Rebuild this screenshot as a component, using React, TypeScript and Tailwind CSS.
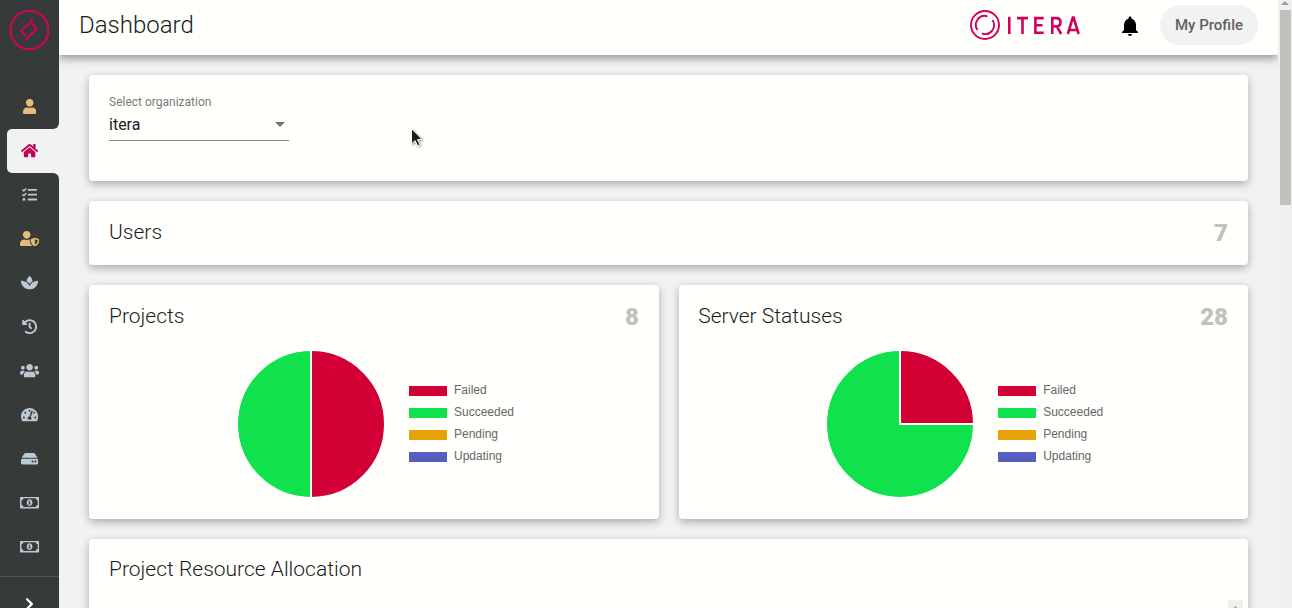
import React from "react";
import {
  FaUser, FaHome, FaTasks, FaUserShield, FaSpa, FaHistory, FaUsers,
  FaTachometerAlt, FaHdd, FaRegMoneyBillAlt, FaChevronRight,
} from "react-icons/fa";

const NAV = [
  { Icon: FaUser, cls: "w-[13.4px] h-[15.3px] text-[#e6bb7c]" },
  { Icon: FaHome, cls: "w-[17.2px] h-[15.3px] text-[#c9005a]" },
  { Icon: FaTasks, cls: "w-[15.3px] h-[15.3px] text-[#bccad4]" },
  { Icon: FaUserShield, cls: "w-[19.2px] h-[15.3px] text-[#e6bb7c]" },
  { Icon: FaSpa, cls: "w-[17.2px] h-[15.3px] text-[#bccad4]" },
  { Icon: FaHistory, cls: "w-[15.3px] h-[15.3px] text-[#bccad4]" },
  { Icon: FaUsers, cls: "w-[19.2px] h-[15.3px] text-[#bccad4]" },
  { Icon: FaTachometerAlt, cls: "w-[17.2px] h-[15.3px] text-[#bccad4]" },
  { Icon: FaHdd, cls: "w-[17.2px] h-[15.3px] text-[#bccad4]" },
  { Icon: FaRegMoneyBillAlt, cls: "w-[19.2px] h-[15.3px] text-[#bccad4]" },
  { Icon: FaRegMoneyBillAlt, cls: "w-[19.2px] h-[15.3px] text-[#bccad4]" },
];

const LEGEND = [
  { label: "Failed", color: "bg-[#d30036]" },
  { label: "Succeeded", color: "bg-[#10e24e]" },
  { label: "Pending", color: "bg-[#e6a307]" },
  { label: "Updating", color: "bg-[#545fc0]" },
];

const CARD = "rounded bg-[#fffffc] shadow-[0_3px_8px_rgba(0,0,0,0.3)]";

function Sidebar() {
  return (
    <aside className="flex w-[59px] shrink-0 flex-col bg-[#f1f3f3]">
      <div className="flex h-[129px] shrink-0 flex-col rounded-br-[6px] bg-[#363a38]">
        <div className="flex h-[85px] justify-center pt-[10px] pr-px">
          <svg className="h-10 w-10" viewBox="0 0 40 40" fill="none" stroke="#d6005c" strokeWidth="2">
            <circle cx="20.4" cy="20" r="19" />
            <path d="M23.5 8.3 L22 11.7 L12 20.7 L17 26" />
            <path d="M22.5 13.2 L28 18.7 L19 27.3 L17 30.7" />
          </svg>
        </div>
        <NavItem item={NAV[0]} />
      </div>
      <div className="flex h-11 shrink-0 bg-[#363a38]">
        <div className="ml-[7px] flex flex-1 items-center rounded-l-[5px] bg-[#f1f3f3] pr-[7px]">
          <NavItem item={NAV[1]} />
        </div>
      </div>
      <div className="flex flex-1 flex-col rounded-tr-[6px] bg-[#363a38]">
        {NAV.slice(2).map((item, i) => (
          <NavItem key={i} item={item} />
        ))}
        <div className="mt-[7px] flex h-14 shrink-0 items-center justify-center border-t border-[#505452] pr-px pb-[2px]">
          <FaChevronRight className="h-[14px] w-[9px] text-white" />
        </div>
      </div>
    </aside>
  );
}

function NavItem({ item }: { item: (typeof NAV)[number] }) {
  return (
    <div className="flex h-11 w-full shrink-0 items-center justify-center pb-[1.4px]">
      <item.Icon className={item.cls} />
    </div>
  );
}

function Header() {
  return (
    <header className="z-10 flex h-[55px] shrink-0 items-center bg-[#fffffc] pr-5 pl-5 shadow-[0_3px_9px_rgba(0,0,0,0.42)]">
      <h1 className="mb-[6px] flex-1 text-[24px] leading-8 font-light text-[#1c1c1c]">Dashboard</h1>
      <svg className="mb-[5px] h-[30px] w-[112px]" viewBox="0 0 112 30" fill="none" stroke="#d0005c">
        <circle cx="15" cy="15" r="14" strokeWidth="1.9" />
        <path d="M17.5 6.3 A9 9 0 0 0 7.5 20 M22.5 10 A9 9 0 0 1 12 23.5" strokeWidth="1.9" />
        <g strokeWidth="2.6">
          <path d="M39.3 6.8 V24" />
          <path d="M47 8.1 H58 M52.5 8.1 V24" />
          <path d="M73.7 8.1 H65.4 V22.7 H73.7 M65.4 15.3 H72.5" />
          <path d="M82.3 24 V8.1 H86.5 Q90.5 8.1 90.5 12.3 Q90.5 16.4 86.5 16.4 H82.3 M86.8 16.4 L91.2 24" />
          <path d="M97.8 24 L102.8 7.5 H103.6 L108.6 24 M99.5 20 H107" />
        </g>
      </svg>
      <svg className="mb-[3px] ml-[36px] h-6 w-6 text-black" viewBox="0 0 24 24" fill="currentColor">
        <path d="M12 22c1.1 0 2-.9 2-2h-4c0 1.1.89 2 2 2zm6-6v-5c0-3.07-1.64-5.64-4.5-6.32V4c0-.83-.67-1.5-1.5-1.5s-1.5.67-1.5 1.5v.68C7.63 5.36 6 7.92 6 11v5l-2 2v1h16v-1l-2-2z" />
      </svg>
      <button className="mb-[5px] ml-[18px] h-10 w-[98px] rounded-full bg-[#f1f3f3] text-[15px] font-medium text-[#5e625f]">
        My Profile
      </button>
    </header>
  );
}

function CardHead({ title, count }: { title: string; count: string }) {
  return (
    <div className="flex h-8 items-center justify-between">
      <h2 className="text-[21px] leading-8 font-light text-[#1c1c1c]">{title}</h2>
      <span className="pt-[2px] text-[24px] leading-8 font-black text-[#c1c1bd]">{count}</span>
    </div>
  );
}

function PieCard({ title, count, slice, inset }: { title: string; count: string; slice: string; inset: string }) {
  return (
    <section className={`${CARD} h-[234px] min-w-0 pt-[15px] pr-5 ${inset}`}>
      <CardHead title={title} count={count} />
      <div className="mt-[18px] flex items-start pl-[128px]">
        <svg className="h-[148px] w-[148px]" viewBox="0 0 148 148">
          <circle cx="74" cy="74" r="73.3" fill="#10e24e" />
          <path d={slice} fill="#d30036" stroke="#fffffc" strokeWidth="2" />
          <circle cx="74" cy="74" r="74" fill="none" stroke="#fffffc" strokeWidth="2" />
        </svg>
        <ul className="mt-[29px] ml-6 font-['Liberation_Sans',Arial,sans-serif] text-[12px] text-[#666]">
          {LEGEND.map((l) => (
            <li key={l.label} className="flex h-[22px] items-center">
              <span className={`${l.color} mt-[2px] mr-[7px] h-[10px] w-[38px]`} />
              {l.label}
            </li>
          ))}
        </ul>
      </div>
    </section>
  );
}

export default function App() {
  return (
    <div className="relative flex h-[608px] w-[1292px] overflow-hidden bg-[#f1f3f3] font-['Roboto',sans-serif]">
      <Sidebar />
      <div className="flex w-[1219px] shrink-0 flex-col overflow-hidden">
        <Header />
        <main className="flex flex-col gap-5 pt-5 pr-[30px] pl-[30px]">
          <section className={`${CARD} h-[106px] shrink-0 px-5 pt-[18px]`}>
            <div className="w-[180px] border-b border-[#8b8b89] pb-1">
              <div className="text-[12px] leading-[18px] text-[#7b7b79]">Select organization</div>
              <div className="flex items-center justify-between pt-[3px] pr-1">
                <span className="text-[16px] leading-[22px] text-[#202020]">itera</span>
                <svg className="mb-[2px] h-[5px] w-[10px]" viewBox="0 0 10 5"><path d="M0 0h10L5 5z" fill="#757573" /></svg>
              </div>
            </div>
          </section>
          <section className={`${CARD} h-16 shrink-0 px-5 pt-[15px]`}>
            <CardHead title="Users" count="7" />
          </section>
          <div className="grid shrink-0 grid-cols-[570px_569px] gap-5">
            <PieCard title="Projects" count="8" slice="M74 74V-1A75 75 0 0 1 74 149Z" inset="pl-5" />
            <PieCard title="Server Statuses" count="28" slice="M74 74V-1A75 75 0 0 1 149 74Z" inset="pl-[19.2px]" />
          </div>
          <section className={`${CARD} h-[150px] shrink-0 pt-[14px] pr-[5px] pl-5`}>
            <h2 className="text-[21px] leading-8 font-light text-[#1c1c1c]">Project Resource Allocation</h2>
            <div className="mt-[15px] flex justify-end">
              <div className="flex h-[15px] w-[15px] items-center justify-center bg-[#f0f0ee]">
                <svg className="h-[4px] w-[7px]" viewBox="0 0 7 4"><path d="M0 4h7L3.5 0z" fill="#9b9b98" /></svg>
              </div>
            </div>
          </section>
        </main>
      </div>
      <div className="flex w-[14px] shrink-0 flex-col items-center bg-[#f1f0f0]">
        <div className="flex h-[10px] items-start pt-[1px]">
          <svg className="h-[4px] w-[8px]" viewBox="0 0 8 4"><path d="M0 4h8L4 0z" fill="#9c9c99" /></svg>
        </div>
        <div className="h-[195px] w-[11px] bg-[#c0c0bc]" />
      </div>
      <svg className="absolute top-[127px] left-[410px] h-[21px] w-[14px] drop-shadow-[1px_1px_1px_rgba(0,0,0,0.4)]" viewBox="0 0 14 21">
        <path d="M1.5 1.5V17l3.6-3.4 2.5 5.2 2.4-1.1-2.5-5.1h4.7z" fill="#1c1c1c" stroke="#fff" strokeWidth="1" />
      </svg>
    </div>
  );
}
